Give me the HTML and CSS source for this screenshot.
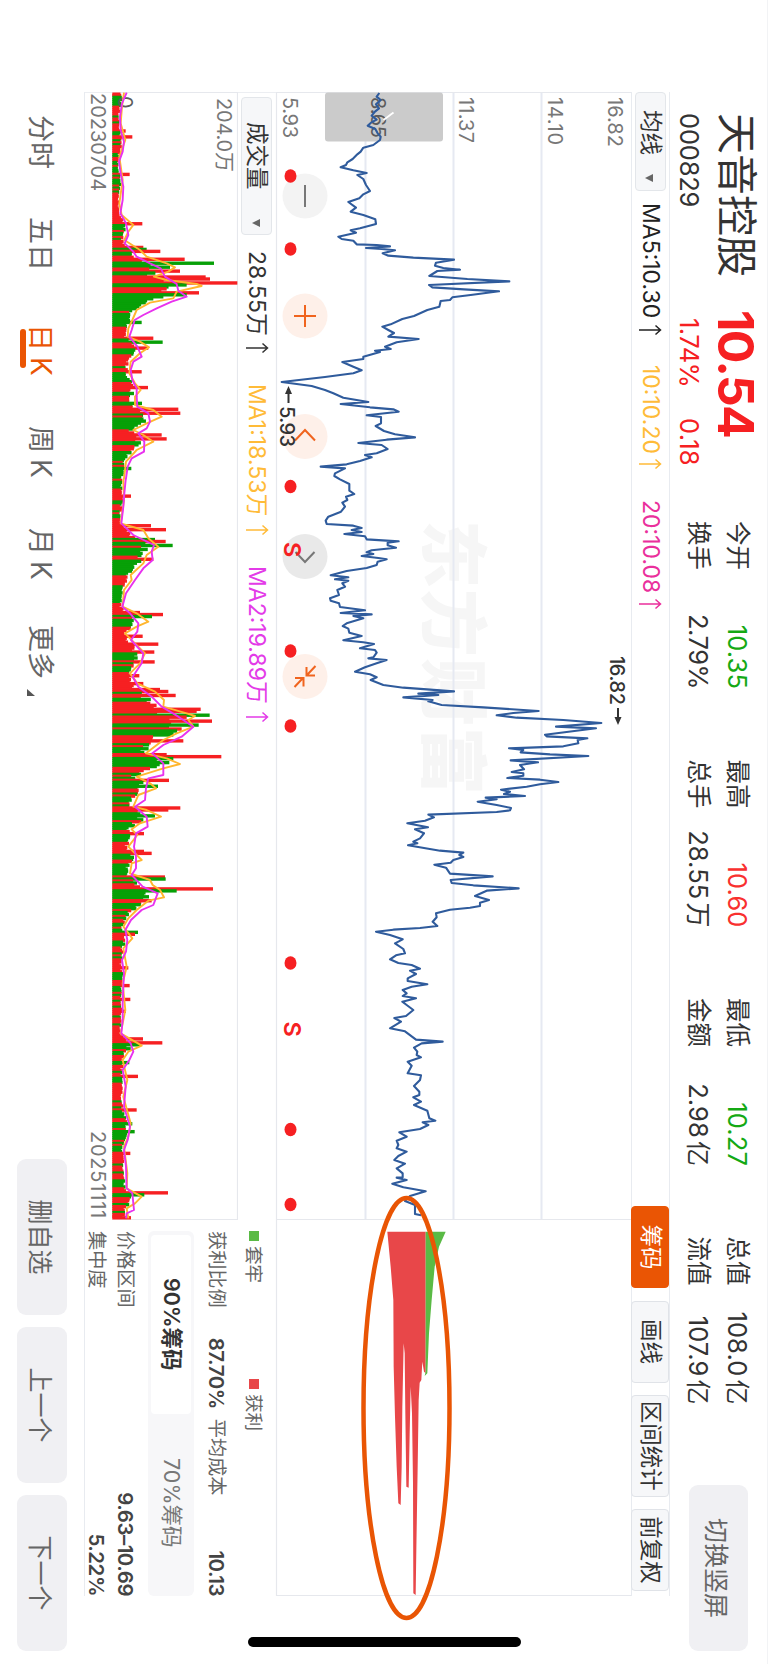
FILE: index.html
```html
<!DOCTYPE html>
<html lang="zh-CN">
<head>
<meta charset="utf-8">
<title>天音控股 000829</title>
<link rel="stylesheet" href="styles.css">
</head>
<body>
<svg width="0" height="0" class="defs">
  <symbol id="up" viewBox="0 0 12 24"><path d="M6 23V2M1.5 6.5 6 1.5l4.500 5" fill="none" stroke="currentColor" stroke-width="1.500"/></symbol>
</svg>
<div class="device">
<div class="screen">
  <header class="header">
    <div class="quote">
      <div class="quote-top"><span class="name">天音控股</span><span class="last">10.54</span></div>
      <div class="quote-sub"><span class="code">000829</span><span class="pct">1.74%</span><span class="chg">0.18</span></div>
    </div>
    <div class="stats">
      <div class="stat"><span>今开</span><span class="val down">10.35</span></div>
      <div class="stat"><span>最高</span><span class="val rise">10.60</span></div>
      <div class="stat"><span>最低</span><span class="val down">10.27</span></div>
      <div class="stat"><span>总值</span><span class="val">108.0<em>亿</em></span></div>
      <div class="stat"><span>换手</span><span class="val tight">2.79%</span></div>
      <div class="stat"><span>总手</span><span class="val">28.55<em>万</em></span></div>
      <div class="stat"><span>金额</span><span class="val">2.98<em>亿</em></span></div>
      <div class="stat"><span>流值</span><span class="val">107.9<em>亿</em></span></div>
    </div>
    <button class="btn rotate-btn">切换竖屏</button>
  </header>

  <div class="toolbar">
    <div class="select select-ma"><span>均线</span><i class="caret"></i></div>
    <div class="ind ma5"><span>MA5:10.30</span><svg class="up"><use href="#up"/></svg></div>
    <div class="ind ma10"><span>10:10.20</span><svg class="up"><use href="#up"/></svg></div>
    <div class="ind ma20"><span>20:10.08</span><svg class="up"><use href="#up"/></svg></div>
    <div class="tabs">
      <span class="tab on">筹码</span><span class="tab">画线</span><span class="tab wide">区间统计</span><span class="tab">前复权</span>
    </div>
  </div>

  <svg class="price" viewBox="92 137 1504 355">
    <text class="wm" x="520" y="340" textLength="275">东方财富</text>
    <g class="grid">
      <path d="M92 226.500H1219.500M92 314.500H1219.500M92 402.500H1219.500" class="mid"/>
      <path d="M92.500 137V491.500H1595.500V137M1219.500 137V491.500"/>
    </g>
    <g class="axis">
      <text x="97" y="160" textLength="50">16.82</text>
      <text x="97" y="220.500" textLength="48">14.10</text>
      <text x="97" y="309" textLength="46">11.37</text>
      <text x="97" y="485" textLength="41">5.93</text>
    </g>
    <rect x="92.500" y="325" width="49" height="118" rx="3" fill="#cbcbcb"/>
    <text class="axis dark" x="97" y="397" textLength="41">8.65</text>
    <path id="price-line"/>
    <path d="M120 384.500 112.500 374.500" stroke="#fff" stroke-width="1.800" fill="none"/>
    <g class="tools">
      <circle cx="196" cy="463" r="22.500" fill="#f3f3f3"/>
      <path d="M185 463h22" stroke="#777"/>
      <circle cx="316" cy="463" r="22.500" fill="#fef0e9"/>
      <path d="M305 463h22M316 452v22" stroke="#f0641e"/>
      <circle cx="436.500" cy="463" r="22.500" fill="#fef0e9"/>
      <path d="M440.500 453 430 463l10.500 10" stroke="#f0641e"/>
      <circle cx="556.500" cy="463" r="22.500" fill="#e9e9e9"/>
      <path d="M552 453.500 562 463l-10 9.500" stroke="#777"/>
      <circle cx="676.500" cy="463" r="22.500" fill="#fef0e9"/>
      <path d="M666 452.500 675 461M667 461.500h8.500V453M687 473.500 678 465M678 473v-8.500h8.500" stroke="#f0641e" stroke-width="2.200"/>
    </g>
    <g class="marks">
      <ellipse cx="176" cy="477.500" rx="6.700" ry="6"/><ellipse cx="249" cy="477.500" rx="6.700" ry="6"/>
      <ellipse cx="486.500" cy="477.500" rx="6.700" ry="6"/><ellipse cx="651" cy="477.500" rx="6.700" ry="6"/>
      <ellipse cx="726" cy="477.500" rx="6.700" ry="6"/><ellipse cx="963" cy="477.500" rx="6.700" ry="6"/>
      <ellipse cx="1129.500" cy="477.500" rx="6.700" ry="6"/><ellipse cx="1204.500" cy="477.500" rx="6.700" ry="6"/>
      <text x="542" y="484">S</text><text x="1021.500" y="484">S</text>
    </g>
    <g class="tips">
      <path d="M389 479.500H403M708 150H722" stroke="#333" stroke-width="2"/>
      <path d="M386 479.500l8-3.500v7zM725 150l-8-3.500v7z" fill="#333"/>
      <text x="406" y="488" textLength="41">5.93</text><text x="656" y="158" textLength="49">16.82</text>
    </g>
    <g id="chips"></g>
    <ellipse cx="1408" cy="361.500" rx="210" ry="43" fill="none" stroke="#e95504" stroke-width="4.500"/>
  </svg>

  <div class="lower">
    <div class="volume">
      <div class="vol-head">
        <div class="select select-vol"><span>成交量</span><i class="caret"></i></div>
        <div class="ind v0"><span>28.55万</span><svg class="up"><use href="#up"/></svg></div>
        <div class="ind v1"><span>MA1:18.53万</span><svg class="up"><use href="#up"/></svg></div>
        <div class="ind v2"><span>MA2:19.89万</span><svg class="up"><use href="#up"/></svg></div>
      </div>
      <svg class="vol-chart" viewBox="92 530 1128 126">
        <g class="grid"><path d="M92.500 656V530.500H1219.500V656"/></g>
        <text class="axis" x="98" y="551" textLength="74">204.0万</text>
        <g id="bars"></g>
        <text class="axis dark" x="96" y="650">0</text>
        <path id="vma1"/><path id="vma2"/>
      </svg>
      <div class="dates"><span>20230704</span><span class="last-day">20251111</span></div>
    </div>
    <div class="chip-info">
      <div class="legend"><span><i class="sq green"></i>套牢</span><span><i class="sq red"></i>获利</span></div>
      <div class="row r1"><span>获利比例</span><b class="profit">87.70%</b><span>平均成本</span><b class="end">10.13</b></div>
      <div class="seg"><span class="on">90%筹码</span><span>70%筹码</span></div>
      <div class="row r2"><span>价格区间</span><b class="end">9.63–10.69</b></div>
      <div class="row r3"><span>集中度</span><b class="end">5.22%</b></div>
    </div>
  </div>

  <footer class="footer">
    <nav class="periods">
      <span class="p1">分时</span><span class="p2">五日</span><span class="p3 on">日<em>K</em></span><span class="p3">周<em>K</em></span><span class="p4">月<em>K</em></span><span class="more">更多<i class="corner"></i></span>
    </nav>
    <div class="actions"><button class="btn">删自选</button><button class="btn">上一个</button><button class="btn">下一个</button></div>
  </footer>
  <div class="home-bar"></div>
</div>
</div>
<script src="charts.js"></script>
</body>
</html>
```
FILE: styles.css
```css
* { box-sizing: border-box; }
body { margin: 0; background: #fff; }
.defs { position: absolute; }
.device { width: 768px; height: 1664px; overflow: hidden; }

/* Landscape screen turned clockwise into the portrait window */
.screen {
  width: 1664px; height: 768px;
  transform: translateX(768px) rotate(90deg);
  transform-origin: 0 0;
  display: flex; flex-direction: column;
  background: #fff; color: #333;
  font-family: Inter, "Noto Sans CJK SC", sans-serif;
  font-size: 24px; line-height: 1; white-space: nowrap;
  border-top: 1px solid #f2f3f5;
}
.rise { color: #f9302f; }
.down { color: #14a914; }
.btn { border: 0; border-radius: 9px; background: #f0f0f3; color: #666; font: 25px "Noto Sans CJK SC", sans-serif; padding: 0; }

.header { display: flex; height: 97px; padding-left: 113px; }
.quote { width: 408px; }
.quote-top { display: flex; align-items: center; height: 61px; }
.name { font-size: 41px; width: 197px; }
.last { font-size: 50px; font-weight: 700; color: #f62022; letter-spacing: -1.800px; }
.quote-sub { display: flex; align-items: center; height: 34px; font-size: 25.500px; }
.code { width: 205px; letter-spacing: -0.200px; }
.pct, .chg { color: #f62022; }
.pct { width: 100px; letter-spacing: -0.500px; }
.chg { letter-spacing: 0.300px; }
.stats { display: grid; grid-template-columns: repeat(4, 168px); column-gap: 70.500px; grid-template-rows: 39px 39px; padding-top: 10px; width: 964px; }
.stat { display: flex; align-items: center; justify-content: space-between; font-size: 24.500px; }
.val { font-size: 25.500px; letter-spacing: 0.100px; }
.val.tight { letter-spacing: -0.500px; }
.val em { font-style: normal; font-size: 25px; margin-left: 3px; }
.rotate-btn { width: 166px; height: 59px; margin-top: 19px; }

.toolbar { display: flex; align-items: center; height: 39px; margin: 0 68px 0 92px; border-top: 1px solid #e8ebf0; border-bottom: 1px solid #e8ebf0; font-size: 23px; }
.select { display: flex; align-items: center; height: 31px; border: 1px solid #e3e6ea; border-radius: 4px; background: #f6f7f9; font-size: 22.500px; color: #333; }
.select-ma { width: 99px; padding-left: 17px; }
.select-ma .caret { margin-left: 19px; }
.caret { border: 4px solid transparent; border-top: 8px solid #666; border-bottom: 0; margin-top: 2px; }
.ind { display: flex; align-items: center; justify-content: space-between; }
.up { width: 12px; height: 24px; }
.ma5 { margin-left: 12px; width: 133px; color: #222; }
.ma10 { margin-left: 29px; width: 105px; color: #ffbb38; }
.ma20 { margin-left: 30px; width: 110px; color: #ea2f9c; }
.tabs { display: flex; gap: 12.500px; margin-left: auto; padding-right: 5px; }
.tab { width: 82px; height: 38px; display: flex; align-items: center; justify-content: center; border: 1px solid #e0e3e8; border-radius: 4px; background: #f6f7f9; font-size: 22.500px; }
.tab.wide { width: 101.500px; }
.tab.on { background: #ea5504; border-color: #ea5504; color: #fff; }

.price { width: 1504px; height: 355px; margin-left: 92px; overflow: visible; flex: none; }
.grid path { fill: none; stroke: #e6e8ed; stroke-width: 1.200; }
.grid .mid { stroke: #e6e9f2; stroke-width: 2; }
.wm { font: 900 68px "Noto Sans CJK SC", sans-serif; fill: #f6f6f6; }
.axis { font-size: 20px; fill: #777; }
.dark { fill: #5c5c5c; }
#price-line { fill: none; stroke: #2f5b9c; stroke-width: 2.100; stroke-linejoin: round; }
.tools path { fill: none; stroke-width: 2; }
.marks { fill: #f62022; font-size: 23.500px; font-weight: 600; }
.tips { font-size: 20px; font-weight: 500; fill: #333; }

.lower { display: flex; height: 192px; margin: 0 68px 0 92px; border-bottom: 1px solid #e8ebf0; }
.volume { width: 1128px; border-left: 1px solid #eceef2; }
.vol-head { display: flex; align-items: center; height: 38px; padding-left: 4px; font-size: 23px; }
.select-vol { width: 138px; padding-left: 24px; }
.select-vol .caret { margin-left: 29px; }
.v0 { width: 103px; margin-left: 16px; }
.v1 { width: 152px; margin-left: 30px; color: #ffbb38; }
.v2 { width: 157px; margin-left: 30px; color: #e33be8; }
.vol-chart { display: block; width: 1128px; height: 126px; margin-left: -1px; }
#vma1, #vma2 { fill: none; stroke-width: 1.900; stroke-linejoin: round; }
#vma1 { stroke: #ffb62e; }
#vma2 { stroke: #e832ee; }
.dates { display: flex; justify-content: space-between; align-items: center; height: 28px; font-size: 20px; color: #777; padding: 0 1px 0 0; }
.last-day { letter-spacing: 0.800px; }

.chip-info { width: 365px; margin-left: 11px; font-size: 19.200px; color: #666; }
.legend { display: flex; align-items: center; height: 44px; font-size: 18.500px; }
.legend span { display: flex; align-items: center; width: 148px; }
.sq { width: 10px; height: 10px; margin-right: 5px; }
.sq.green { background: #5aba45; }
.sq.red { background: #e84749; }
.row { display: flex; align-items: center; }
.row b { font-weight: 600; font-size: 20.500px; color: #444; letter-spacing: -0.500px; }
.row .end { margin-left: auto; }
.profit { width: 81px; margin-left: 30px; }
.r1 { height: 32px; }
.seg { display: flex; height: 46px; margin-top: 6px; padding: 3px 4px; background: #f7f7f9; border-radius: 6px; font-size: 21.500px; }
.seg span { flex: 1; display: flex; align-items: center; justify-content: center; color: #777; }
.seg .on { background: #fff; border-radius: 4px; color: #333; font-weight: 600; }
.r2 { height: 30px; margin-top: 8px; }
.r3 { height: 24px; margin-top: 2px; }

.footer { display: flex; justify-content: space-between; padding: 17.300px 13px 0 115px; height: 84px; }
.periods { display: flex; font-size: 27px; color: #666; height: 52px; align-items: center; }
.periods span { position: relative; }
.periods em { font-style: normal; font-size: 28px; line-height: 27px; margin-left: 6px; }
.p1 { width: 102px; }
.p2 { width: 107px; }
.p3 { width: 102px; }
.p4 { width: 97px; }
.periods .on { color: #ea5504; }
.periods .on::after { content: ""; position: absolute; left: 5px; bottom: -7px; width: 39px; height: 6px; border-radius: 3px; background: #ea5504; }
.more { width: 54px; }
.corner { position: absolute; right: -17px; bottom: 0; border-left: 7px solid transparent; border-bottom: 8px solid #555; }
.actions { display: flex; gap: 12px; }
.actions .btn { width: 156px; height: 50px; }
.home-bar { position: absolute; left: 1637px; top: 246px; width: 10px; height: 273px; border-radius: 5px; background: #000; }
```
FILE: charts.js
```js
// Every series is a list of (level, time) pairs in thirds of a pixel,
// relative to the segment's own origin.
const HEIGHT = 768;
const pairs = (s) => s.trim().split(/[;\s]+/).filter(Boolean).map((p) => p.split(',').map(Number));
const place = (level0, time0, s) => pairs(s).map(([l, t]) => [time0 + t / 3, HEIGHT - (level0 + l / 3)]);
const toPath = (pts) => 'M' + pts.map((p) => p[0].toFixed(2) + ' ' + p[1].toFixed(2)).join('L');

const price = [
  place(310, 85, `208,24;200,35;212,45;198,58;207,70;195,80;185,92;200,104;183,113;173,122;196,132;203,145;212,155;210,165;190,180;160,188;152,200;142,208;128,222;112,232;108,240;92,247;130,256;170,264;142,270;160,282;168,300;180,318;160,328;148,340;115,351;138,368;122,380;160,390;196,403;198,417;150,430;122,436;138,443;85,455;95,462;130,467;140,478;200,480;240,484;168,489;215,492;255,496;218,505;235,512;310,518;432,524;378,533;375,542;400,549`),
  place(384, 80, `228,569;160,573;136,588;250,597;376,604;135,615;145,622;240,628;345,634;260,645;205,652;198,660;170,663;166,680;130,690;90,708;55,717;20,733`),
  place(310, 85, `217,725;235,735;252,744;235,755;326,762;260,772;225,785;242,792;195,797;210,801;160,815;160,822;97,831;130,845;155,856;130,865;45,876;-85,891;5,903;45,915;70,925;100,938;175,951;92,957;180,967;250,973;266,980;170,991;213,996;213,1015;197,1023;222,1038;255,1048;315,1057;230,1064;145,1074;215,1080;233,1092;200,1105;165,1110;185,1117;150,1128;110,1138;32,1145;105,1150;75,1165`),
  place(310, 470, `73,18;90,28;118,42;118,62;133,72;108,80;112,90;97,98;105,110;93,125;55,140;47,152;50,162;130,167;155,174;125,180;155,186;103,192;165,199;170,208;266,214;233,218;233,226;258,233;185,241;170,247;190,252;155,258;205,264;230,268;203,275;200,285;170,294;110,303;62,316;115,322;75,328;115,332;97,340;105,350;82,360;87,375;60,385;62,392;87,400;90,411;165,421;92,429;185,433;130,438;160,445;110,460;98,468;115,476;118,488;155,498;100,511;160,517;192,522;150,535;195,540;200,548;190,562;175,565;230,570;200,580;165,592;135,605;180,613;200,622;182,630;220,645;280,653;432,664;325,671;385,675;280,682;368,690;355,694;395,705;520,712;686,723;610,729;560,736;620,743;760,750;874,759;738,770;858,775;705,794;710,799;832,805;803,810;805,820;760,829;597,835;640,840;632,847;720,853;835,858;602,871;684,877;630,885;642,898;605,906;640,910;640,917;592,924;690,929;745,936;690,943;650,950;573,959;600,965;582,972;645,978;527,983;560,988;503,995;560,1005;603,1014;600,1021;560,1026;355,1034;372,1042;345,1052;292,1060;354,1072;315,1078;342,1090;330,1105;310,1115;322,1120;294,1126`),
  place(340, 800, `300,152;370,158;358,165;370,171;340,180;332,188;283,194;318,203;330,221;458,229;332,240;335,249;400,256;536,265;440,272;405,288;447,300;420,308;420,318;390,323;330,329;288,340;290,352;278,365;292,378;240,384;160,389;108,395;150,405;188,418;165,430;190,447;195,460;168,466;150,478;175,489;215,495;240,506;210,512;228,522;203,535;203,543;262,553;215,560;188,570;200,580;188,588;228,595;187,605;200,615;220,630;198,648;163,654;183,665;150,685;195,694;228,719;308,725;245,730;222,743;232,755;230,765;243,772;203,785;215,797;203,820;243,826;240,840;222,858;238,875;238,885;220,892;243,905;222,915;262,932;268,955;286,962;248,967;265,975;240,987;178,997;200,1010;170,1022;175,1035;170,1045;200,1055;175,1068;163,1080;195,1091;170,1105;188,1120;188,1132;170,1133;200,1140;157,1151;190,1162;257,1174;210,1188;195,1203;225,1215;225,1242;243,1246`),
].flat();
document.getElementById('price-line').setAttribute('d', toPath(price));

const chips = {
  '#e84749': `10,95;20,200;28,300;29,500;33,650;38,800;43,910;50,915;53,800;55,620;59,430;62,460;64,640;67,860;74,863;77,700;80,560;84,640;87,850;88,1180;95,1185;97,1050;101,800;104,600;107,548;112,540;115,485;120,515;125,520;125,95`,
  '#5aba45': `125,95;185,95;165,140;152,200;143,300;135,400;130,520;122,528;125,515`,
};
document.getElementById('chips').innerHTML = Object.entries(chips)
  .map(([fill, s]) => `<path d="${toPath(place(384, 1200, s))}Z" fill="${fill}"/>`).join('');

// Volume: (time, level) lists, level 337 is the base line.
const BASE = 337;
const series = (...parts) => parts.flatMap(([t0, s]) => pairs(s).map(([t, v]) => [t0 + t, v]));
const slow = series(
  [240, `38,380;70,366;110,360;150,362;185,372;215,368;245,357;280,362;320,370;360,368;400,361;430,378;465,385;490,374;515,400;530,410;550,450;565,482;590,495;612,530;632,535;650,560;665,515;685,470;705,430;720,404;750,395;770,388;800,412;830,425;845,400;870,392;900,397;925,410;950,410;980,412;1000,445;1025,450;1045,440;1060,415;1085,433;1115,432;1135,395;1160,383;1195,378`],
  [1440, `0,377;40,373;80,370;130,364;165,400;195,462;215,455;240,458;265,430;300,405;340,378;380,367;400,390;430,415;455,412;480,393;520,430;550,425;590,398;620,415;650,455;680,485;710,535;740,580;770,545;795,490;820,457;850,490;885,490;895,445;925,438;960,435;980,405;1010,440;1040,443;1060,408;1100,402;1130,408`],
  [2580, `25,408;45,395;80,428;100,473;135,460;150,425;180,393;210,376;240,382;275,378;300,366;340,372;380,370;430,368;480,368;520,364;550,392;575,400;600,388;630,368;680,377;740,372;800,390;840,383;870,372;920,378;985,380;1000,397;1050,402;1060,380;1075,378`]);
const fast = series(
  [240, `38,372;80,366;130,362;180,376;230,358;300,368;370,358;405,365;435,400;455,385;480,373;510,420;530,440;550,500;562,525;575,505;590,462;600,500;612,590;618,605;635,530;655,520;668,450;690,410;720,397;745,385;770,383;785,420;802,447;820,420;845,392;880,388;910,405;930,422;950,405;975,405;990,460;1010,485;1030,440;1050,400;1065,430;1085,460;1110,410;1145,378;1195,372`],
  [1440, `0,370;60,372;130,362;150,430;175,445;200,475;225,440;250,430;285,392;300,395;330,372;380,368;400,410;425,445;440,410;460,375;490,405;520,435;550,420;580,390;610,412;635,465;660,492;680,490;700,560;708,585;720,565;740,580;760,530;780,490;820,438;835,500;852,540;865,490;890,410;910,450;925,468;945,415;980,400;990,440;1010,483;1030,420;1048,395;1065,412;1100,385;1140,425`],
  [2580, `10,395;40,390;60,450;75,458;90,480;112,492;122,445;150,410;175,385;200,370;235,397;265,370;320,380;370,368;450,376;520,362;545,405;557,425;575,385;600,368;660,382;710,370;790,392;830,385;860,372;940,382;985,380;1010,425;1030,405;1045,380;1075,385`]);

const tops = (t0, s) => s.split(';').map((e) => {
  const [t, v] = e.slice(0, -1).split(',').map(Number);
  return [t0 + t, v, e.slice(-1)];
});
const peaks = [
  ...tops(240, '153,377r;170,397r;282,389r;430,427r;500,430r;506,440g;513,481r;537,554r;548,642g;560,510g;572,540r;594,617r;600,630r;607,712r;615,560g;637,597r;629,500r;645,560g;655,460g;726,425g;775,460r;785,488g;806,445r;874,425r;921,444r;972,426g;990,535r;997,541r;1062,485r;1075,500r;1163,394g;1247,393r'),
  ...tops(1440, '140,453r;147,498r;180,465g;186,497r;194,518g;236,460r;395,420r;406,489r;412,456g;471,428r;495,475r;519,463r;543,464r;590,418r;612,430r;630,480r;637,505r;649,527r;685,602r;691,590r;703,629g;714,560r;726,636r;738,596g;750,545r;762,520g;780,550r;825,500r;831,664r;838,520g;845,508g;867,450r;903,507r;921,474g;985,541r;992,505r;1005,465g;1063,432r;1115,432r;1122,455r;1190,495r;1198,497g;1228,639r;1234,530g'),
  ...tops(2580, '112,447g;120,455r;217,414g;224,405r;323,385r;377,389r;418,391r;454,378r;538,429r;549,487r;555,420g;605,388g;650,414r;750,410r;790,397g;815,404g;880,391r;998,504r;1004,433g;1073,393r'),
];
// Share of rising days up to each time.
const zones = series(
  [240, `340,.45;430,.95;470,.1;500,.9;530,.1;545,1;560,0;575,1;592,0;612,1;622,0;640,1;740,.08;775,.9;830,.35;870,.9;908,.02;940,.95;950,.1;970,.9;980,0;1000,1;1060,.4;1085,.7;1095,0;1112,1;1195,.2`],
  [1440, `0,.45;125,.4;180,.85;240,.5;290,.05;310,.8;370,.3;410,.85;440,.1;500,.7;530,.5;580,.08;635,.95;670,.35;700,1;710,0;732,1;770,.05;790,1;825,.1;835,1;862,.05;890,.8;930,.1;980,.4;1000,1;1020,0;1060,.6;1090,.05;1120,1;1140,.4`],
  [2580, `45,.35;72,.05;90,1;110,0;130,.9;165,.05;190,.7;218,.1;245,.95;255,0;300,.5;330,.95;365,.35;400,.2;500,.45;550,1;570,0;600,.65;670,.45;740,.85;795,.5;825,.05;890,.3;990,.6;1000,1;1015,0;1060,.65;1090,1`]);

const at = (pts, t) => {
  let i = 1;
  while (i < pts.length - 1 && pts[i][0] < t) i++;
  const [a, b] = [pts[i - 1], pts[i]];
  const k = Math.min(1, Math.max(0, (t - a[0]) / (b[0] - a[0])));
  return a[1] + (b[1] - a[1]) * k;
};
let seed = 829;
const random = () => (seed = (seed * 16807) % 2147483647) / 2147483647;

const DAYS = 571, START = 277.5, PITCH = (3658.5 - START) / DAYS;
const days = Array.from({ length: DAYS }, (_, i) => {
  const t = START + (i + 0.5) * PITCH;
  const level = Math.min(at(slow, t), at(fast, t)) - BASE;
  const share = (zones.find((z) => z[0] >= t) || [0, 0.5])[1];
  return { top: BASE + level * (0.7 + random() * 0.24), rise: random() < share };
});
peaks.forEach(([t, v, c]) => {
  const day = days[Math.min(DAYS - 1, Math.round((t - START) / PITCH - 0.5))];
  day.top = v;
  day.rise = c === 'r';
});
// Bars are wider than a day, so each one overlaps its neighbours.
const BAR = 3.4;
const bottom = HEIGHT - BASE / 3;
document.getElementById('bars').innerHTML = days.map((d, i) => {
  const h = (d.top - BASE) / 3;
  const x = Math.min(1219.5 - BAR, Math.max(92.5, (START + (i + 0.5) * PITCH) / 3 - BAR / 2));
  return `<rect x="${x.toFixed(2)}" y="${(bottom - h).toFixed(2)}" width="${BAR}" height="${h.toFixed(2)}" fill="${d.rise ? '#f62022' : '#07a007'}"/>`;
}).join('');
const curve = (pts) => toPath(pts.map(([t, v]) => [t / 3, HEIGHT - v / 3]));
document.getElementById('vma1').setAttribute('d', curve(fast));
document.getElementById('vma2').setAttribute('d', curve(slow));
```
